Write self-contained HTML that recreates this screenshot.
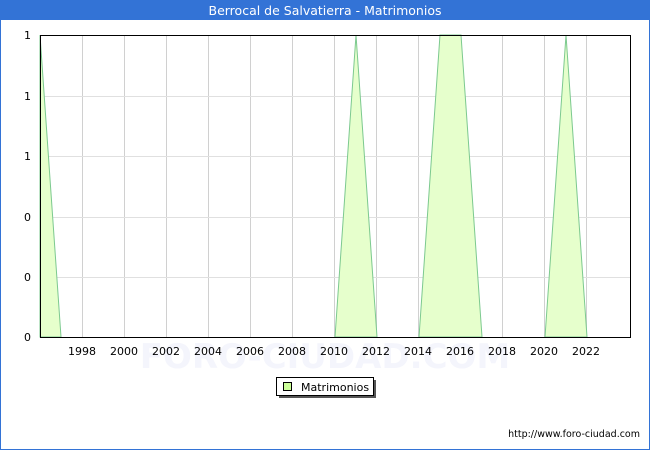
<!DOCTYPE html>
<html><head><meta charset="utf-8"><style>
html,body{margin:0;padding:0;background:#fff;}
svg{display:block;font-family:"DejaVu Sans","Liberation Sans",sans-serif;}
</style></head><body>
<svg width="650" height="450" viewBox="0 0 650 450">
<rect x="0.5" y="0.5" width="649" height="449" fill="#fff" stroke="#3373d6"/>
<rect x="0" y="0" width="650" height="20" fill="#3373d6"/>
<text x="325" y="15" fill="#fff" font-size="12.5" text-anchor="middle">Berrocal de Salvatierra - Matrimonios</text>
<text x="325" y="368" fill="#f4f5fc" font-size="34" text-anchor="middle" font-weight="bold">FORO-CIUDAD.COM</text>
<g stroke="#d0d0d0" stroke-width="1">
<line x1="82.5" y1="35" x2="82.5" y2="337"/>
<line x1="124.5" y1="35" x2="124.5" y2="337"/>
<line x1="166.5" y1="35" x2="166.5" y2="337"/>
<line x1="208.5" y1="35" x2="208.5" y2="337"/>
<line x1="250.5" y1="35" x2="250.5" y2="337"/>
<line x1="292.5" y1="35" x2="292.5" y2="337"/>
<line x1="334.5" y1="35" x2="334.5" y2="337"/>
<line x1="376.5" y1="35" x2="376.5" y2="337"/>
<line x1="418.5" y1="35" x2="418.5" y2="337"/>
<line x1="460.5" y1="35" x2="460.5" y2="337"/>
<line x1="502.5" y1="35" x2="502.5" y2="337"/>
<line x1="544.5" y1="35" x2="544.5" y2="337"/>
<line x1="586.5" y1="35" x2="586.5" y2="337"/>
</g>
<g stroke="#e0e0e0" stroke-width="1">
<line x1="40" y1="96.5" x2="630" y2="96.5"/>
<line x1="40" y1="156.5" x2="630" y2="156.5"/>
<line x1="40" y1="217.5" x2="630" y2="217.5"/>
<line x1="40" y1="277.5" x2="630" y2="277.5"/>
</g>
<g fill="#e6ffcc" stroke="#7cc98f" stroke-width="1">
<polygon points="40,35 61,337 40,337"/>
<polygon points="335,337 356,35 377,337"/>
<polygon points="419,337 440,35 461,35 482,337"/>
<polygon points="545,337 566,35 587,337"/>
</g>
<rect x="40.5" y="35.5" width="590" height="302" fill="none" stroke="#000" stroke-width="1"/>
<g font-size="11" fill="#000" text-anchor="end">
<text x="31" y="39">1</text>
<text x="31" y="100">1</text>
<text x="31" y="160">1</text>
<text x="31" y="221">0</text>
<text x="31" y="281">0</text>
<text x="31" y="341">0</text>
</g>
<g font-size="11" fill="#000" text-anchor="middle">
<text x="82" y="355">1998</text>
<text x="124" y="355">2000</text>
<text x="166" y="355">2002</text>
<text x="208" y="355">2004</text>
<text x="250" y="355">2006</text>
<text x="292" y="355">2008</text>
<text x="334" y="355">2010</text>
<text x="376" y="355">2012</text>
<text x="418" y="355">2014</text>
<text x="460" y="355">2016</text>
<text x="502" y="355">2018</text>
<text x="544" y="355">2020</text>
<text x="586" y="355">2022</text>
</g>
<rect x="279" y="380" width="97" height="18" fill="#555"/>
<rect x="276.5" y="377.5" width="97" height="18" fill="#fff" stroke="#000"/>
<rect x="283.5" y="382.5" width="8" height="8" fill="#ccff99" stroke="#000"/>
<text x="301" y="391" font-size="11" fill="#000">Matrimonios</text>
<text x="640" y="437" font-size="9.5" fill="#000" text-anchor="end">http://www.foro-ciudad.com</text>
</svg>
</body></html>
